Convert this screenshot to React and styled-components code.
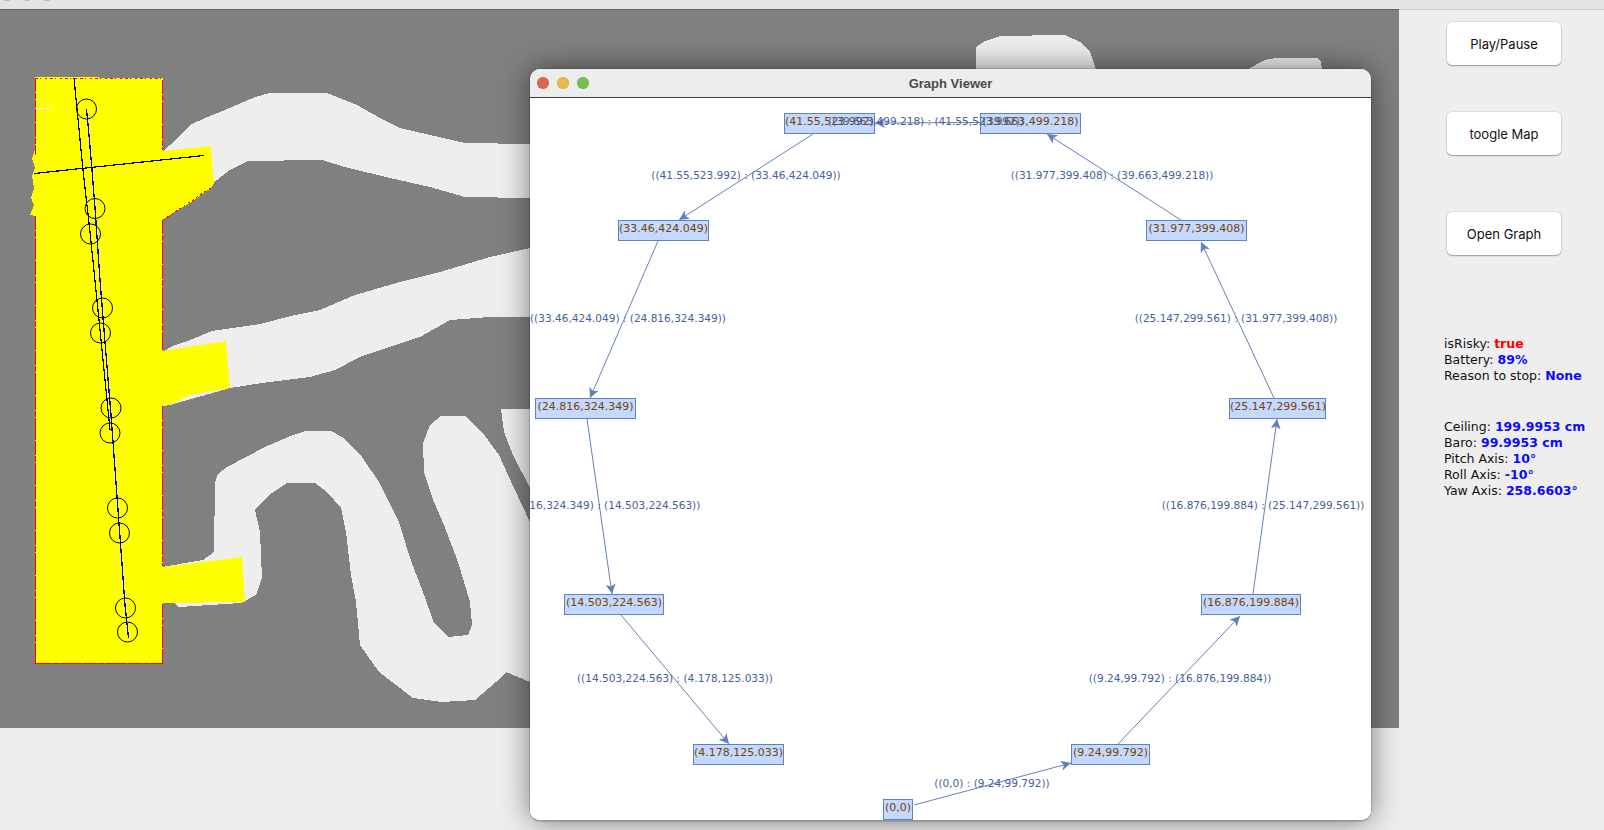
import React from "react";
import styled, { createGlobalStyle } from "styled-components";

const Global = createGlobalStyle`
  html, body { margin: 0; padding: 0; background: #eeeeee; overflow: hidden; }
`;

const WIN_X = 530;
const WIN_Y = 98;
const UI_FONT = `"DejaVu Sans", "Liberation Sans", sans-serif`;

const Page = styled.div`
  position: relative;
  width: 1604px;
  height: 830px;
  background: #eeeeee;
  overflow: hidden;
  font-family: ${UI_FONT};
`;
const TopBar = styled.div`
  height: 9px;
  background: #e4e4e4;
  display: flex;
  gap: 8px;
  padding-left: 1px;
  overflow: hidden;
`;
const TopDot = styled.span`
  width: 12px;
  height: 12px;
  margin-top: -11px;
  border-radius: 50%;
  background: #b5b5b5;
`;
const Body = styled.div`
  display: flex;
  height: 821px;
`;
const MapColumn = styled.div`
  width: 1399px;
  flex: none;
`;
const MapCanvas = styled.svg`
  display: block;
  width: 1399px;
  height: 718px;
  background: #808080;
  border-top: 1px solid #626262;
`;
const SidePanel = styled.aside`
  flex: 1;
  display: flex;
  flex-direction: column;
  padding: 12px 0 0 48px;
  background: #eeeeee;
  border-top: 1px solid #cfcfcf;
`;
const ControlButton = styled.button`
  width: 114px;
  height: 43px;
  flex: none;
  margin-top: ${(p) => p.$top}px;
  border: 0;
  border-radius: 5px;
  background: #ffffff;
  box-shadow: 0 0 0 0.5px rgba(0, 0, 0, 0.12), 0 1px 1.5px rgba(0, 0, 0, 0.32);
  color: #111111;
  font: 400 13px Inter, "Liberation Sans", sans-serif;
  padding: 0;
`;
const StatusBlock = styled.div`
  margin-top: ${(p) => p.$top}px;
  margin-left: -3px;
  font-size: 12.5px;
  line-height: 16px;
  color: #111111;
  white-space: nowrap;
`;
const StatusLine = styled.div``;
const Value = styled.b`
  color: ${(p) => p.$color || "#0a0aff"};
`;

const GraphWindow = styled.section`
  position: absolute;
  left: ${WIN_X}px;
  top: 69px;
  width: 841px;
  height: 752px;
  border-radius: 10px;
  background: #ffffff;
  box-shadow: 0 0 30px rgba(0, 0, 0, 0.5), 0 0 0 0.5px rgba(0, 0, 0, 0.3);
  border-bottom: 1px solid #9a9a9a;
  box-sizing: border-box;
  display: flex;
  flex-direction: column;
  overflow: hidden;
`;
const TitleBar = styled.header`
  position: relative;
  height: 28px;
  flex: none;
  background: #ededed;
  border-bottom: 1px solid #3c3c3c;
  display: flex;
  align-items: center;
  justify-content: center;
`;
const Lights = styled.div`
  position: absolute;
  left: 7px;
  top: 8px;
  display: flex;
  gap: 8px;
`;
const Light = styled.span`
  width: 12px;
  height: 12px;
  border-radius: 50%;
  background: ${(p) => p.$color};
  box-shadow: inset 0 0 0 0.5px rgba(0, 0, 0, 0.12);
`;
const Title = styled.h1`
  margin: 0;
  font: 700 13px "Liberation Sans", sans-serif;
  color: #4a4a4a;
`;
const GraphArea = styled.div`
  position: relative;
  flex: 1;
  overflow: hidden;
  background: #ffffff;
`;
const EdgeLayer = styled.svg`
  position: absolute;
  left: 0;
  top: 0;
  width: 841px;
  height: 724px;
`;
const Node = styled.div`
  position: absolute;
  left: ${(p) => p.$x - WIN_X}px;
  top: ${(p) => p.$y - WIN_Y}px;
  width: ${(p) => p.$w}px;
  height: 21px;
  box-sizing: border-box;
  background: #c3d9ff;
  border: 1px solid #6482b9;
  color: #774400;
  font-size: 11px;
  line-height: 15px;
  text-align: center;
  white-space: nowrap;
`;
const EdgeLabel = styled.div`
  position: absolute;
  left: ${(p) => p.$cx - WIN_X}px;
  top: ${(p) => p.$cy - WIN_Y - 7}px;
  transform: translateX(-50%);
  color: #446299;
  font-size: 10.55px;
  line-height: 16px;
  white-space: nowrap;
`;

const nodes = [
  ["(41.55,523.992)", 784, 113, 91],
  ["(39.663,499.218)", 980, 113, 101],
  ["(33.46,424.049)", 618, 220, 91],
  ["(31.977,399.408)", 1146, 220, 101],
  ["(24.816,324.349)", 535, 398, 101],
  ["(25.147,299.561)", 1229, 398, 97],
  ["(14.503,224.563)", 564, 594, 100],
  ["(16.876,199.884)", 1201, 594, 100],
  ["(4.178,125.033)", 693, 744, 91],
  ["(9.24,99.792)", 1071, 744, 79],
  ["(0,0)", 883, 799, 30],
];

const edges = [
  [914, 805, 1071, 763],
  [1118, 744, 1240, 616],
  [1253, 594, 1277, 419],
  [1274, 398, 1201, 242],
  [1181, 220, 1047, 134],
  [980, 122.5, 875, 123],
  [813, 134, 679, 220],
  [658, 241, 590, 398],
  [587, 419, 612, 594],
  [621, 615, 729, 744],
];

const labels = [
  ["((41.55,523.992) : (33.46,424.049))", 746, 174],
  ["((39.663,499.218) : (41.55,523.992))", 926, 120],
  ["((31.977,399.408) : (39.663,499.218))", 1112, 174],
  ["((33.46,424.049) : (24.816,324.349))", 628, 317],
  ["((25.147,299.561) : (31.977,399.408))", 1236, 317],
  ["((24.816,324.349) : (14.503,224.563))", 599, 504],
  ["((16.876,199.884) : (25.147,299.561))", 1263, 504],
  ["((14.503,224.563) : (4.178,125.033))", 675, 677],
  ["((9.24,99.792) : (16.876,199.884))", 1180, 677],
  ["((0,0) : (9.24,99.792))", 992, 782],
];

const road1 =
  "162,152 170,145 190,125 205,118 225,110 255,97 270,93 327,93 357,105 380,118 400,128 430,135 465,143 530,144 530,198 465,197 430,187 390,178 345,167 322,160 248,161 230,170 213,183";
const road2 =
  "162,352 175,345 190,340 212,331 260,324 295,315 320,310 355,295 400,282 440,272 490,257 530,248 530,317 490,317 450,320 420,337 380,350 360,357 335,370 310,377 262,383 230,388 170,405 162,406";
const road3 =
  "162,567 203,560 214,552 215,482 218,474 227,467 265,447 293,435 305,431 331,431 344,438 362,457 379,482 399,522 410,558 424,595 434,623 448,637 468,635 472,625 470,602 458,562 444,525 434,502 424,472 423,443 430,425 441,416 465,416 482,432 499,455 514,488 530,522 530,682 506,672 496,682 475,700 441,702 413,698 379,672 360,645 356,602 351,575 346,532 341,508 327,492 315,483 287,483 269,495 255,510 260,532 262,578 256,595 241,603 179,607 174,603 162,603";
const road4 = "501,409 530,409 530,488 513,455 504,432";
const bump1 = "976,69 976,47 985,41 1000,36 1065,35 1080,42 1090,52 1096,69";
const bump2 = "1248,69 1265,60 1275,58 1318,58 1321,62 1322,69";

const yellow =
  "35,77 163,78 163,151 211,146 214,183 212,187 190,203 165,218 163,220 163,351 226,341 230,388 190,395 170,405 163,406 163,567 242,557 245,602 163,603 163,663 35,663 35,216 30,215 34,205 31,198 34,188 32,176 35,168 32,158 35,150";
const redEdges = [
  "M35 78 L163 78",
  "M35 78 L35 155",
  "M35 216 L35 663 L163 663",
  "M162.5 80 L162.5 150",
  "M162.5 220 L162.5 350",
  "M162.5 406 L162.5 566",
  "M162.5 604 L162.5 663",
  "M163 220 L212 187",
];

const circles = [
  [86.5, 109], [95, 208.5], [90.5, 234], [102.5, 308], [100.5, 333], [111, 408],
  [110, 433], [117.5, 508], [119.5, 533], [125.5, 608], [127.5, 632],
];

const App = () => (
  <Page>
    <Global />
    <TopBar>
      <TopDot />
      <TopDot />
      <TopDot />
    </TopBar>
    <Body>
      <MapColumn>
        <MapCanvas viewBox="0 10 1399 718" shapeRendering="crispEdges">
          <g fill="#eeeeee">
            <polygon points={road1} />
            <polygon points={road2} />
            <polygon points={road3} />
            <polygon points={road4} />
            <polygon points={bump1} />
            <polygon points={bump2} />
          </g>
          <polygon points={yellow} fill="#ffff00" />
          <g fill="none" stroke="#ff0000" strokeWidth="1">
            {redEdges.map((d, i) => (
              <path key={i} d={d} strokeDasharray={i === 0 ? "3 2 1 4 2 3" : i === 7 ? "2 3" : "14 1 6 1 22 1"} />
            ))}
          </g>
          <path d="M35 108 H52" stroke="#eeeeee" strokeWidth="1" />
          <path d="M74 78 L83 170 L90 232 L100 330 L110 430" fill="none" stroke="#000000" strokeWidth="1.2" />
          <path d="M34 173.5 L204 155.5" stroke="#000000" strokeWidth="1.2" />
          <path
            d="M86.5 109 L89 135 L92 170 L95 208 L100 280 L104 330 L111 415 L118 510 L125 605 L128.5 638"
            fill="none"
            stroke="#0000ff"
            strokeWidth="1.3"
          />
          <g fill="none" stroke="#000000" strokeWidth="1" shapeRendering="auto">
            {circles.map(([cx, cy], i) => (
              <circle key={i} cx={cx} cy={cy} r="10" />
            ))}
          </g>
        </MapCanvas>
      </MapColumn>
      <SidePanel>
        <ControlButton $top={0}>Play/Pause</ControlButton>
        <ControlButton $top={47}>toogle Map</ControlButton>
        <ControlButton $top={57}>Open Graph</ControlButton>
        <StatusBlock $top={81}>
          <StatusLine>isRisky: <Value $color="#ff0000">true</Value></StatusLine>
          <StatusLine>Battery: <Value>89%</Value></StatusLine>
          <StatusLine>Reason to stop: <Value>None</Value></StatusLine>
        </StatusBlock>
        <StatusBlock $top={35}>
          <StatusLine>Ceiling: <Value>199.9953 cm</Value></StatusLine>
          <StatusLine>Baro: <Value>99.9953 cm</Value></StatusLine>
          <StatusLine>Pitch Axis: <Value>10°</Value></StatusLine>
          <StatusLine>Roll Axis: <Value>-10°</Value></StatusLine>
          <StatusLine>Yaw Axis: <Value>258.6603°</Value></StatusLine>
        </StatusBlock>
      </SidePanel>
    </Body>
    <GraphWindow>
      <TitleBar>
        <Lights>
          <Light $color="#dc6552" />
          <Light $color="#e8bb47" />
          <Light $color="#74bf50" />
        </Lights>
        <Title>Graph Viewer</Title>
      </TitleBar>
      <GraphArea>
        <EdgeLayer viewBox={`${WIN_X} ${WIN_Y} 841 724`}>
          <defs>
            <marker id="arrow" viewBox="0 0 10 10" refX="10" refY="5" markerWidth="10" markerHeight="10" markerUnits="userSpaceOnUse" orient="auto">
              <path d="M0 0 L10 5 L0 10 L2.5 5 Z" fill="#6482b9" />
            </marker>
          </defs>
          {edges.map(([x1, y1, x2, y2], i) => (
            <line key={i} x1={x1} y1={y1} x2={x2} y2={y2} stroke="#6482b9" strokeWidth="1" markerEnd="url(#arrow)" />
          ))}
        </EdgeLayer>
        {nodes.map(([text, x, y, w]) => (
          <Node key={text} $x={x} $y={y} $w={w}>{text}</Node>
        ))}
        {labels.map(([text, cx, cy]) => (
          <EdgeLabel key={text} $cx={cx} $cy={cy}>{text}</EdgeLabel>
        ))}
      </GraphArea>
    </GraphWindow>
  </Page>
);

export default App;
